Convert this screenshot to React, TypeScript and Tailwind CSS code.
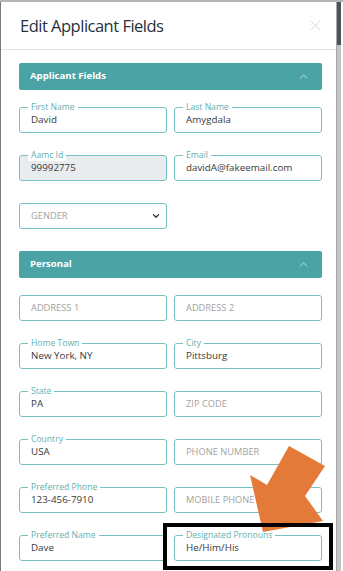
import { ChevronDown, ChevronUp, X } from 'lucide-react';

type Field = { label?: string; value?: string; placeholder?: string; disabled?: boolean };

const FieldBox = ({ label, value, placeholder, disabled }: Field) => (
  <div
    className={`relative h-[26px] rounded-[3px] border border-[#76c1c1] flex items-center pl-[11px] ${
      disabled ? 'bg-[#e9ecee]' : 'bg-white'
    }`}
  >
    {label && (
      <span className="absolute left-[8px] top-[-6px] bg-white px-[3px] text-[8.6px] leading-[11px] text-[#5fb0b2]">
        {label}
      </span>
    )}
    {value ? (
      <span className="text-[9.8px] text-[#3a3a3a] pt-[1px]">{value}</span>
    ) : (
      <span className="text-[9.3px] text-[#a2a2a2]">{placeholder}</span>
    )}
  </div>
);

const SectionHeader = ({ title }: { title: string }) => (
  <div className="h-[27px] bg-[#4ba3a5] rounded-[2px] flex items-center justify-between pl-[11px] pr-[12px]">
    <span className="text-[9.6px] font-bold text-white">{title}</span>
    <ChevronUp className="w-[13px] h-[13px] text-[#d8eeee]" strokeWidth={1.5} />
  </div>
);

const applicant: Field[] = [
  { label: 'First Name', value: 'David' },
  { label: 'Last Name', value: 'Amygdala' },
  { label: 'Aamc Id', value: '99992775', disabled: true },
  { label: 'Email', value: 'davidA@fakeemail.com' },
];

const personal: Field[] = [
  { placeholder: 'ADDRESS 1' },
  { placeholder: 'ADDRESS 2' },
  { label: 'Home Town', value: 'New York, NY' },
  { label: 'City', value: 'Pittsburg' },
  { label: 'State', value: 'PA' },
  { placeholder: 'ZIP CODE' },
  { label: 'Country', value: 'USA' },
  { placeholder: 'PHONE NUMBER' },
  { label: 'Preferred Phone', value: '123-456-7910' },
  { placeholder: 'MOBILE PHONE' },
  { label: 'Preferred Name', value: 'Dave' },
  { label: 'Designated Pronouns', value: 'He/Him/His' },
];

export default function App() {
  return (
    <div
      className="relative w-[343px] h-[571px] overflow-hidden bg-white border-t-2 border-[#b4b4b4] flex"
      style={{ fontFamily: '"Open Sans", "Liberation Sans", sans-serif' }}
    >
      <div className="w-[337px] h-full border-l border-r border-l-[#7a7a7a] border-r-[#a8a8a8] flex flex-col">
        {/* modal header */}
        <div className="h-[48px] shrink-0 border-b border-[#e4e4e4] flex items-center justify-between pl-[19px] pr-[12px]">
          <h1 className="text-[16.5px] tracking-[-0.5px] text-[#25313d] pt-[1px]">Edit Applicant Fields</h1>
          <X className="w-[17px] h-[17px] text-[#d4d4d4]" strokeWidth={1.3} />
        </div>

        <div className="pl-[18px] pr-[14px] pt-[13px]">
          <SectionHeader title="Applicant Fields" />
          <div className="mt-[17px] grid grid-cols-2 gap-x-[7px] gap-y-[22px]">
            {applicant.map((f) => (
              <FieldBox key={f.label} {...f} />
            ))}
            <div className="relative h-[26px] rounded-[3px] border border-[#76c1c1] flex items-center justify-between pl-[11px] pr-[5px]">
              <span className="text-[9.3px] text-[#a2a2a2]">GENDER</span>
              <ChevronDown className="w-[10px] h-[10px] text-[#333]" strokeWidth={3} />
            </div>
          </div>

          <div className="mt-[22px]">
            <SectionHeader title="Personal" />
          </div>
          <div className="mt-[17px] grid grid-cols-2 gap-x-[7px] gap-y-[22px]">
            {personal.map((f) => (
              <FieldBox key={f.label ?? f.placeholder} {...f} />
            ))}
          </div>
        </div>
      </div>

      {/* backdrop strip on the right */}
      <div className="w-[4px] h-full flex flex-col">
        <div className="h-[43px] bg-[#4a545c]" />
        <div className="flex-1 bg-[#c4c4c4]" />
      </div>

      {/* annotation */}
      <svg className="absolute left-0 top-0" width="343" height="571" viewBox="0 0 343 571">
        <polygon
          points="263,530 250,473 267,483 289,444 325,464 305,494 323,519"
          fill="#e47a39"
        />
      </svg>
      <div className="absolute left-[163px] top-[521px] w-[170px] h-[47px] border-[4px] border-black" />
    </div>
  );
}
